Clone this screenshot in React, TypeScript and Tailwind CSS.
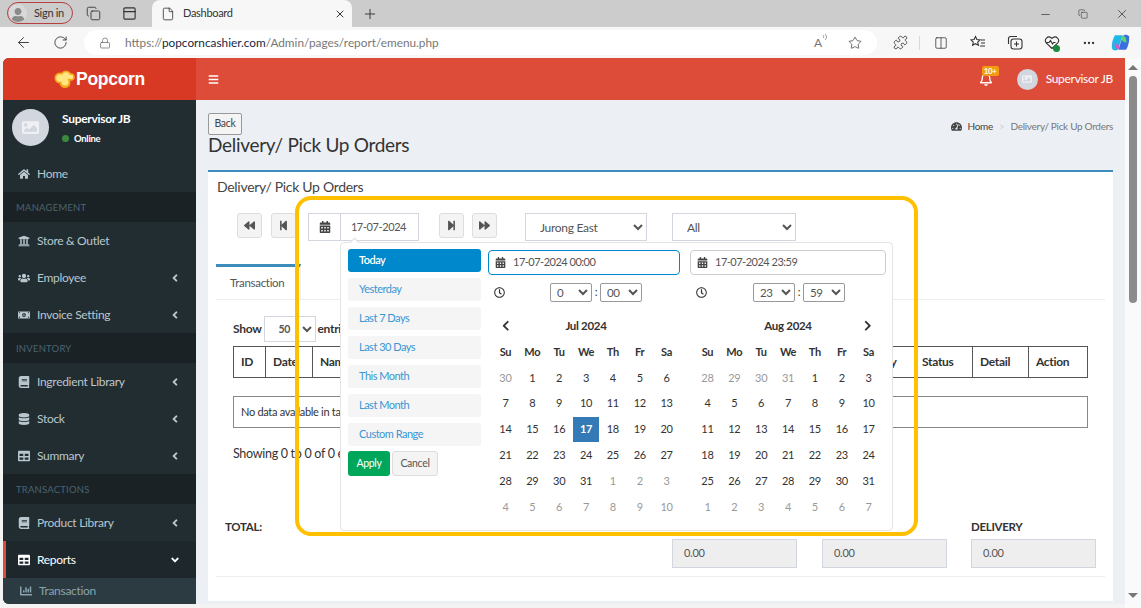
import { ArrowLeft, Copy, Ellipsis, File, Lock, Minus, PanelTop, Plus, Puzzle, RotateCw, Star, X, Columns2 } from "lucide-react";
import { ReactNode } from "react";
import {
  FaAngleDown,
  FaAngleLeft,
  FaBackward,
  FaBars,
  FaBook,
  FaCalendarAlt,
  FaChevronLeft,
  FaChevronRight,
  FaDatabase,
  FaForward,
  FaHome,
  FaImage,
  FaMoneyBillAlt,
  FaRegBell,
  FaRegClock,
  FaStepBackward,
  FaStepForward,
  FaTable,
  FaTachometerAlt,
  FaUniversity,
  FaUser,
  FaUsers,
  FaChartBar,
} from "react-icons/fa";

const sideItems = [
  { label: "Home", icon: <FaHome /> },
  { section: "MANAGEMENT" },
  { label: "Store & Outlet", icon: <FaUniversity /> },
  { label: "Employee", icon: <FaUsers />, more: true },
  { label: "Invoice Setting", icon: <FaMoneyBillAlt />, more: true },
  { section: "INVENTORY" },
  { label: "Ingredient Library", icon: <FaBook />, more: true },
  { label: "Stock", icon: <FaDatabase />, more: true },
  { label: "Summary", icon: <FaTable />, more: true },
  { section: "TRANSACTIONS" },
  { label: "Product Library", icon: <FaBook />, more: true },
];

const ranges = ["Today", "Yesterday", "Last 7 Days", "Last 30 Days", "This Month", "Last Month", "Custom Range"];
const weekDays = ["Su", "Mo", "Tu", "We", "Th", "Fr", "Sa"];

const makeDays = (before: number[], count: number, afterCount: number) => [
  ...before.map((d) => ({ d, off: true })),
  ...Array.from({ length: count }, (_, i) => ({ d: i + 1, off: false })),
  ...Array.from({ length: afterCount }, (_, i) => ({ d: i + 1, off: true })),
];

const BrowserIcon = ({ children }: { children: ReactNode }) => (
  <span className="flex w-[37px] justify-center text-[#333]">{children}</span>
);

const Browser = () => (
  <div className="shrink-0">
    <div className="flex h-[27px] items-end bg-[#cccccc] pl-[7px]">
      <div className="mb-[3px] flex h-[22px] w-[66px] items-center gap-[7px] rounded-full border border-[#b5403f] pl-[1px] text-[11px] text-[#333]">
        <span className="flex h-[18px] w-[18px] items-end justify-center overflow-hidden rounded-full bg-[#d8d8d8] text-[14px] text-[#8a8a8a]">
          <FaUser />
        </span>
        Sign in
      </div>
      <Copy size={15} strokeWidth={1.4} className="mb-[6px] ml-[13px] text-[#333]" />
      <PanelTop size={15} strokeWidth={1.8} className="mb-[6px] ml-[21px] text-[#333]" />
      <div className="ml-[15px] flex h-[27px] w-[200px] items-center rounded-t-[8px] bg-[#f7f7f7] pl-[9px] pr-[6px] text-[11px] text-[#333]">
        <File size={14} strokeWidth={1.4} />
        <span className="ml-[8px]">Dashboard</span>
        <X size={12} className="ml-auto" />
      </div>
      <Plus size={16} strokeWidth={1.4} className="mb-[5px] ml-[10px] text-[#333]" />
      <div className="mb-[6px] ml-auto flex w-[102px] items-center text-[#333]">
        <Minus size={13} strokeWidth={1.3} />
        <Copy size={10} strokeWidth={1.4} className="ml-[26px]" />
        <X size={14} strokeWidth={1.3} className="ml-[27px]" />
      </div>
    </div>
    <div className="flex h-[31px] items-center bg-[#f7f7f7] pl-[15px]">
      <ArrowLeft size={17} strokeWidth={1.3} className="text-[#333]" />
      <RotateCw size={15} strokeWidth={1.4} className="ml-[21px] text-[#333]" />
      <div className="ml-[16px] flex h-[25px] w-[793px] items-center rounded-full bg-white pl-[15px] pr-[15px] text-[11.8px] tracking-normal">
        <Lock size={12} strokeWidth={1.4} className="text-[#666]" />
        <span className="ml-[14px] text-[#777]">
          https://<span className="text-[#16283f]">popcorncashier.com</span>/Admin/pages/report/emenu.php
        </span>
        <span className="ml-auto flex items-start text-[12px] text-[#777]">
          A
          <svg width="6" height="8" viewBox="0 0 6 8" fill="none" stroke="#777" strokeWidth="0.8">
            <path d="M1 1c1 1 1 2 0 3M3 0c2 2 2 4 0 6" />
          </svg>
        </span>
        <Star size={14} strokeWidth={1.3} className="ml-[20px] text-[#444]" />
      </div>
      <div className="flex items-center">
        <span className="ml-[14px] flex w-[18px] justify-center text-[#333]"><Puzzle size={15} strokeWidth={1.4} /></span>
        <span className="ml-[10px] h-[14px] w-px bg-[#d8d8d8]" />
        <span className="ml-[2px] flex"><BrowserIcon><Columns2 size={14} strokeWidth={1.3} /></BrowserIcon></span>
        <BrowserIcon>
          <svg width="16" height="15" viewBox="0 0 16 15" fill="none" stroke="#333" strokeWidth="1.1">
            <path d="M5.5 1.5l1.4 3 3.2.4-2.4 2.2.7 3.2-2.9-1.6-2.9 1.6.7-3.2L.9 4.9l3.2-.4z" fill="#fff" />
            <path d="M11 5h4M11 8h4M10 11h5" />
          </svg>
        </BrowserIcon>
        <BrowserIcon>
          <svg width="16" height="15" viewBox="0 0 16 15" fill="none" stroke="#333" strokeWidth="1.1">
            <path d="M1.5 9V3.5a2 2 0 0 1 2-2H10" />
            <rect x="4" y="4" width="11" height="10" rx="2.5" />
            <path d="M9.5 6.5v5M7 9h5" />
          </svg>
        </BrowserIcon>
        <span className="relative flex w-[37px] justify-center">
          <svg width="16" height="15" viewBox="0 0 16 15" fill="none" stroke="#333" strokeWidth="1.1">
            <path d="M8 13.5 2.2 7.8a3.6 3.6 0 0 1 5-5.1l.8.8.8-.8a3.6 3.6 0 0 1 5 5.1z" />
            <path d="M2 7.5h3l1.5-2 2 3.5 1-1.5h2" />
          </svg>
          <span className="absolute bottom-[-2px] right-[10px] h-[7px] w-[7px] rounded-full bg-[#1a8a3c]" />
        </span>
        <BrowserIcon><Ellipsis size={14} /></BrowserIcon>
        <svg width="21" height="21" viewBox="0 0 20 20" className="ml-[3px]">
          <path d="M5 3h7L8 16c-1 2-5 2-6 0C1 12 3 5 5 3z" fill="#1fb6e8" />
          <path d="M15 17H8l4-13c1-2 5-2 6 0 1 4-1 11-3 13z" fill="#3a6fe0" />
          <path d="M11 4h2c1 0 2 1 2 2l1 4-4-1z" fill="#62d26f" />
          <path d="M9 16H7c-1 0-2-1-2-2l-1-3 4 1z" fill="#d65ac0" />
        </svg>
      </div>
    </div>
  </div>
);

const Sidebar = () => (
  <aside className="flex h-[546px] w-[193px] shrink-0 flex-col overflow-hidden rounded-l-[6px] bg-[#222d32]">
    <div className="flex h-[42px] shrink-0 items-center justify-center gap-[1px] bg-[#d73925]">
      <svg width="21" height="18" viewBox="0 0 21 18">
        <g fill="#f6a81c">
          <circle cx="6" cy="8" r="5.5" />
          <circle cx="12" cy="6" r="5.5" />
          <circle cx="11" cy="12.5" r="5.5" />
          <circle cx="17" cy="7" r="3.8" />
        </g>
        <g fill="#ffe680">
          <circle cx="6" cy="8" r="3.8" />
          <circle cx="12" cy="6" r="3.8" />
          <circle cx="11" cy="12" r="3.5" />
          <circle cx="17" cy="7" r="2.2" />
        </g>
      </svg>
      <span className="font-['Liberation_Sans'] text-[17.5px] font-bold text-white">Popcorn</span>
    </div>
    <div className="flex h-[55px] shrink-0 pl-[9px] pt-[9px]">
      <span className="flex h-[37px] w-[37px] items-center justify-center rounded-full bg-[#d2d6de] text-[17px] text-[#eef0f3]">
        <FaImage />
      </span>
      <div className="ml-[13px] text-white">
        <p className="text-[12px] font-bold leading-[19px]">Supervisor JB</p>
        <p className="mt-[1px] flex items-center gap-[5px] text-[9.5px] font-bold leading-[19px]">
          <span className="h-[7px] w-[7px] rounded-full bg-[#3c8a3f]" />
          Online
        </p>
      </div>
    </div>
    {sideItems.map((item) =>
      item.section ? (
        <div
          key={item.section}
          className="flex h-[30px] shrink-0 items-center bg-[#1a2226] pl-[13px] pt-[2px] text-[9.5px] tracking-[0.2px] text-[#4b646f]"
        >
          {item.section}
        </div>
      ) : (
        <div key={item.label} className="flex h-[37px] shrink-0 items-center pl-[15px] pr-[15px] text-[12px] text-[#b8c7ce]">
          <span className="flex w-[12px] justify-center text-[12px]">{item.icon}</span>
          <span className="ml-[7px]">{item.label}</span>
          {item.more && <FaAngleLeft className="ml-auto text-[12px]" />}
        </div>
      ),
    )}
    <div className="flex h-[37px] shrink-0 items-center border-l-[3px] border-[#dd4b39] bg-[#1e282c] pl-[12px] pr-[15px] text-[12px] text-white">
      <FaTable className="w-[12px] text-[12px]" />
      <span className="ml-[7px]">Reports</span>
      <FaAngleDown className="ml-auto text-[12px]" />
    </div>
    <div className="flex h-[26px] shrink-0 items-center bg-[#2c3b41] pl-[17px] text-[12px] text-[#8aa4af]">
      <FaChartBar className="text-[12px]" />
      <span className="ml-[7px]">Transaction</span>
    </div>
  </aside>
);

const SquareButton = ({ children }: { children: ReactNode }) => (
  <button className="flex h-[25px] w-[25px] items-center justify-center rounded-[3px] border border-[#ddd] bg-[#f4f4f4] text-[11px] text-[#555]">
    {children}
  </button>
);

const Filters = () => (
  <div className="mt-[17px] flex items-start pl-[29px]">
    <SquareButton><FaBackward /></SquareButton>
    <span className="ml-[9px]"><SquareButton><FaStepBackward /></SquareButton></span>
    <div className="ml-[12px] flex h-[28px] w-[111px] border border-[#d2d6de]">
      <span className="flex w-[32px] items-center justify-center border-r border-[#d2d6de] text-[12px] text-[#444]">
        <FaCalendarAlt />
      </span>
      <span className="flex flex-1 items-center justify-center pr-[2px] text-[11px] tracking-[-0.4px] text-[#555]">17-07-2024</span>
    </div>
    <span className="ml-[20px]"><SquareButton><FaStepForward /></SquareButton></span>
    <span className="ml-[8px]"><SquareButton><FaForward /></SquareButton></span>
    <select defaultValue="Jurong East" className="ml-[28px] h-[28px] w-[122px] border border-[#d2d6de] pl-[10px] text-[12px] text-[#555]">
      <option>Jurong East</option>
    </select>
    <select defaultValue="All" className="ml-[25px] h-[28px] w-[124px] border border-[#d2d6de] pl-[10px] text-[12px] text-[#555]">
      <option>All</option>
    </select>
  </div>
);

const tableColumns = [
  { label: "ID", w: "w-[32px]" },
  { label: "Date", w: "w-[47px]" },
  { label: "Name", w: "w-[533px]" },
  { label: "Delivery", w: "w-[69px] pl-[8px]" },
  { label: "Status", w: "w-[58px]" },
  { label: "Detail", w: "w-[56px]" },
  { label: "Action", w: "w-[60px]" },
];

const TablePane = () => (
  <div className="pl-[17px]">
    <div className="flex h-[26px] items-center text-[12px] font-bold text-[#333]">
      Show
      <select defaultValue="50" className="ml-[2px] mr-[2px] h-[26px] w-[52px] border border-[#d2d6de] pl-[10px] text-[10.5px] font-bold text-[#555]">
        <option>50</option>
      </select>
      entries
    </div>
    <div className="mt-[4px] flex h-[32px] w-[855px] border border-[#555] text-[12px] font-bold text-[#333]">
      {tableColumns.map((col) => (
        <div key={col.label} className={`flex shrink-0 items-center border-r border-[#555] pl-[7px] last:border-r-0 ${col.w}`}>
          {col.label}
        </div>
      ))}
    </div>
    <div className="mt-[18px] flex h-[32px] w-[855px] items-center border border-[#888] pl-[7px] text-[11px] text-[#333]">
      No data available in table
    </div>
    <p className="mt-[18px] text-[12.5px] leading-[16px] text-[#333]">Showing 0 to 0 of 0 entries</p>
  </div>
);

const TotalField = ({ label, margin }: { label?: string; margin: string }) => (
  <div className={`relative h-[29px] w-[125px] ${margin}`}>
    {label && <p className="absolute top-[-19px] text-[11.5px] font-bold leading-[14px] text-[#333]">{label}</p>}
    <div className="flex h-[29px] items-center border border-[#d2d6de] bg-[#eee] pl-[11px] text-[11px] text-[#555]">0.00</div>
  </div>
);

const Totals = () => (
  <div className="mt-[58px] border-b border-[#eee] pb-[8px] pl-[9px]">
    <div className="flex h-[48px]">
      <p className="w-[447px] text-[11.5px] font-bold leading-[14px] text-[#333]">TOTAL:</p>
      <div className="mt-[19px] flex">
        <TotalField margin="" />
        <TotalField margin="ml-[25px]" />
        <TotalField label="DELIVERY" margin="ml-[24px]" />
      </div>
    </div>
  </div>
);

const Calendar = ({ title, days, prev, next, highlight }: {
  title: string;
  days: { d: number; off: boolean }[];
  prev?: boolean;
  next?: boolean;
  highlight?: number;
}) => (
  <div className="w-[188px] text-[11px] text-[#333]">
    <div className="flex h-[26px] items-center justify-between px-[8px] text-[11.5px] font-bold">
      <span className="w-[12px]">{prev && <FaChevronLeft />}</span>
      {title}
      <span className="w-[12px]">{next && <FaChevronRight />}</span>
    </div>
    <div className="grid grid-cols-7">
      {weekDays.map((d) => (
        <div key={d} className="flex h-[26px] items-center justify-center font-bold">{d}</div>
      ))}
      {days.map((day, i) => (
        <div
          key={i}
          className={`flex h-[25.8px] items-center justify-center ${
            !day.off && day.d === highlight ? "bg-[#337ab7] font-bold text-white" : day.off ? "text-[#999]" : ""
          }`}
        >
          {day.d}
        </div>
      ))}
    </div>
  </div>
);

const TimeInput = ({ value, active, hour, minute, width, selectMargin }: {
  value: string;
  active?: boolean;
  hour: string;
  minute: string;
  width: string;
  selectMargin: string;
}) => (
  <div className={width}>
    <div className={`flex h-[25px] items-center rounded-[4px] border pl-[6px] text-[11px] tracking-[-0.5px] text-[#555] ${active ? "border-[#0088cc]" : "border-[#ccc]"}`}>
      <FaCalendarAlt className="text-[11px] text-[#444]" />
      <span className="ml-[7px]">{value}</span>
    </div>
    <div className="mt-[7px] flex h-[20px] items-center text-[#333]">
      <FaRegClock className="ml-[6px] text-[11px]" />
      <select defaultValue={hour} className={`h-[19px] w-[42px] rounded-[2px] border border-[#999] pl-[2px] text-[11.5px] text-[#555] ${selectMargin}`}>
        <option>{hour}</option>
      </select>
      <span className="w-[8px] text-center text-[11px]">:</span>
      <select defaultValue={minute} className="h-[19px] w-[42px] rounded-[2px] border border-[#999] pl-[2px] text-[11.5px] text-[#555]">
        <option>{minute}</option>
      </select>
    </div>
  </div>
);

const DatePopup = () => (
  <div className="absolute left-[340px] top-[242px] flex h-[289px] w-[553px] rounded-[4px] border border-[#e4e4e4] bg-white">
    <span className="absolute left-[10px] top-[-4px] h-[7px] w-[7px] rotate-45 border-l border-t border-[#ddd] bg-white" />
    <div className="ml-[7px] mt-[6px] w-[133px] shrink-0">
      {ranges.map((r, i) => (
        <div
          key={r}
          className={`mb-[6px] flex h-[23px] items-center rounded-[3px] pl-[11px] text-[11px] tracking-[-0.5px] ${
            i === 0 ? "bg-[#0088cc] font-semibold text-white" : "bg-[#f5f5f5] text-[#3a96d4]"
          }`}
        >
          {r}
        </div>
      ))}
      <div className="mt-[-1px] flex gap-[2px]">
        <button className="h-[25px] w-[42px] rounded-[3px] bg-[#00a65a] text-[10.5px] text-white">Apply</button>
        <button className="h-[25px] w-[46px] rounded-[3px] border border-[#ddd] bg-[#f4f4f4] text-[10.5px] text-[#555]">Cancel</button>
      </div>
    </div>
    <div className="ml-[7px] mt-[7px]">
      <div className="flex gap-[10px]">
        <TimeInput value="17-07-2024 00:00" active hour="0" minute="00" width="w-[192px]" selectMargin="ml-[45px]" />
        <TimeInput value="17-07-2024 23:59" hour="23" minute="59" width="w-[196px]" selectMargin="ml-[46px]" />
      </div>
      <div className="mt-[11px] flex gap-[14px] pl-[4px]">
        <Calendar title="Jul 2024" prev highlight={17} days={makeDays([30], 31, 10)} />
        <Calendar title="Aug 2024" next days={makeDays([28, 29, 30, 31], 31, 7)} />
      </div>
    </div>
  </div>
);

const Main = () => (
  <main className="flex h-[546px] w-[929px] shrink-0 flex-col bg-[#ecf0f5]">
    <header className="flex h-[42px] shrink-0 items-center bg-[#dd4b39] pl-[12px] pr-[12px] text-white">
      <FaBars className="text-[11px]" />
      <span className="relative ml-auto mr-[24px] text-[14px]">
        <FaRegBell />
        <span className="absolute left-[3px] top-[-6px] rounded-[2px] bg-[#f39c12] px-[2px] text-[8px] font-bold leading-[10px]">10+</span>
      </span>
      <span className="flex h-[21px] w-[21px] items-center justify-center rounded-full bg-[#d2d6de] text-[10px] text-[#eef0f3]">
        <FaImage />
      </span>
      <span className="ml-[8px] text-[12px]">Supervisor JB</span>
    </header>
    <div className="px-[12px] pt-[13px]">
      <div className="flex justify-between">
        <button className="h-[22px] w-[34px] rounded-[2px] border border-[#999] bg-[#f4f4f4] text-[10.5px] text-[#444]">Back</button>
        <div className="mt-[5px] flex items-center text-[10px] text-[#777]">
          <FaTachometerAlt className="text-[11px] text-[#444]" />
          <span className="ml-[6px] text-[#444]">Home</span>
          <span className="mx-[6px] text-[#ccc]">&gt;</span>
          Delivery/ Pick Up Orders
        </div>
      </div>
      <h1 className="mt-[-2px] text-[19px] leading-[23px] text-[#333]">Delivery/ Pick Up Orders</h1>
      <section className="mt-[14px] h-[431px] border-t-[2px] border-[#3c8dbc] bg-white">
        <h2 className="pl-[9px] pt-[6px] text-[14px] leading-[18px] text-[#444]">Delivery/ Pick Up Orders</h2>
        <Filters />
        <div className="mx-[8px] mt-[23px] h-[36px] border-b border-[#eee]">
          <div className="h-[36px] w-[85px] border-r border-t-[3px] border-[#3c8dbc] border-r-[#eee] pl-[14px] pt-[7px] text-[11.5px] text-[#555]">Transaction</div>
        </div>
        <div className="mx-[8px] mt-[16px]">
          <TablePane />
          <Totals />
        </div>
      </section>
    </div>
  </main>
);

export default function App() {
  return (
    <div className="relative h-[608px] w-[1141px] overflow-hidden bg-[#f3f3f3] font-['Lato',sans-serif] tracking-[-0.3px]">
      <Browser />
      <div className="flex pl-[3px]">
        <Sidebar />
        <Main />
        <div className="flex h-[550px] w-[16px] flex-col items-center bg-[#fafafa]">
          <span className="mt-[7px] h-0 w-0 border-x-[5px] border-b-[5px] border-x-transparent border-b-[#777]" />
          <span className="mt-[6px] h-[227px] w-[8px] rounded-full bg-[#8c8c8c]" />
          <span className="mb-[10px] mt-auto h-0 w-0 border-x-[5px] border-t-[5px] border-x-transparent border-t-[#777]" />
        </div>
      </div>
      <DatePopup />
      <div className="pointer-events-none absolute left-[295px] top-[196px] h-[340px] w-[623px] rounded-[16px] border-[4px] border-[#ffc000]" />
    </div>
  );
}
